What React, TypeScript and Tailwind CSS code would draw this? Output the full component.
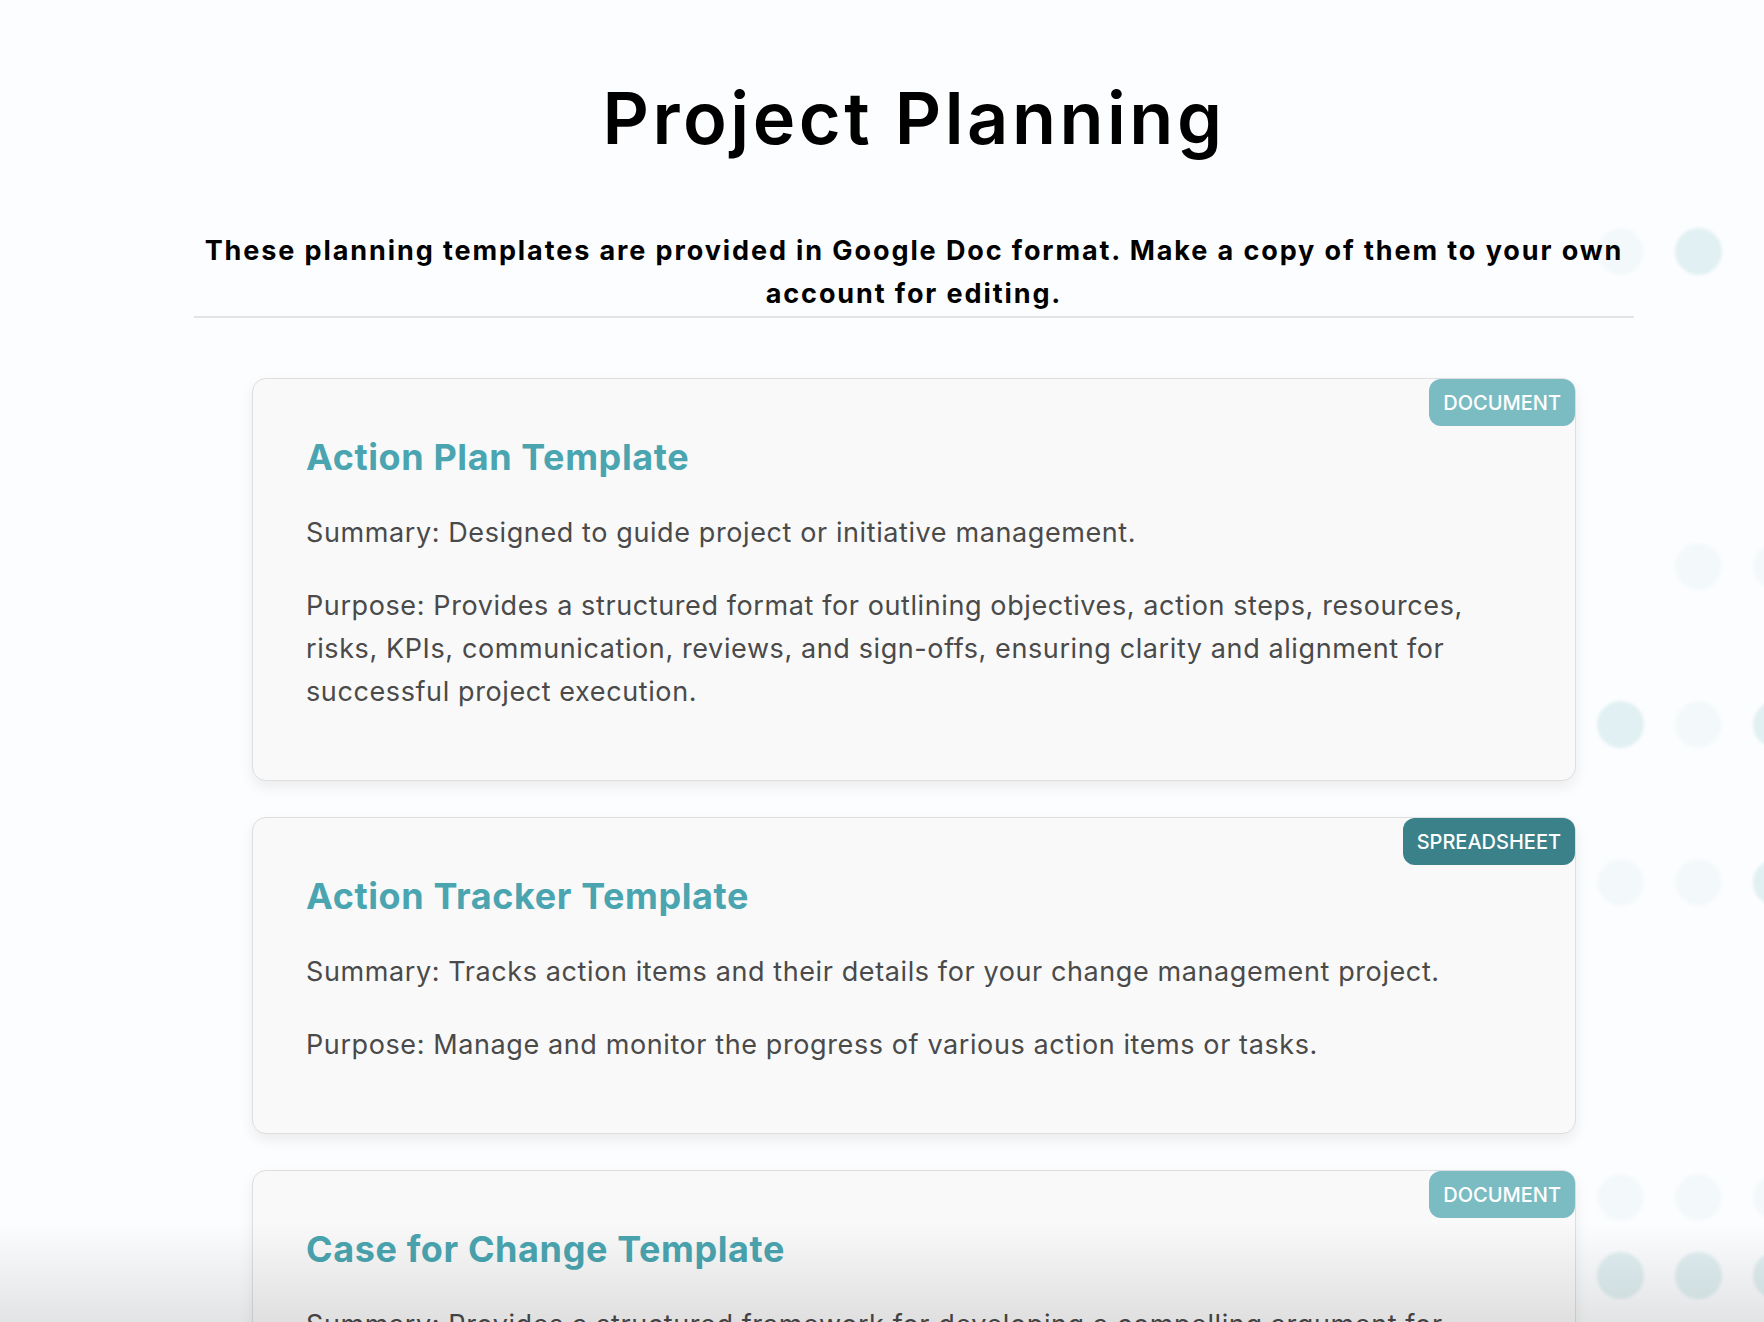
import React from "react"

interface Template {
  title: string
  kind: "DOCUMENT" | "SPREADSHEET"
  summary: string
  purpose: string
}

const TEMPLATES: Template[] = [
  {
    title: "Action Plan Template",
    kind: "DOCUMENT",
    summary: "Summary: Designed to guide project or initiative management.",
    purpose:
      "Purpose: Provides a structured format for outlining objectives, action steps, resources, risks, KPIs, communication, reviews, and sign-offs, ensuring clarity and alignment for successful project execution.",
  },
  {
    title: "Action Tracker Template",
    kind: "SPREADSHEET",
    summary: "Summary: Tracks action items and their details for your change management project.",
    purpose: "Purpose: Manage and monitor the progress of various action items or tasks.",
  },
  {
    title: "Case for Change Template",
    kind: "DOCUMENT",
    summary:
      "Summary: Provides a structured framework for developing a compelling argument for organizational change.",
    purpose:
      "Purpose: Helps leaders articulate why change is needed, what it involves and the benefits it will bring.",
  },
]

// decorative dots on the right edge: [x, y, strong]
const DOTS: [number, number, boolean][] = [
  [1620, 251, false], [1698, 251, true],
  [1698, 566, false], [1776, 566, false],
  [1620, 724, true], [1698, 724, false], [1776, 724, true],
  [1620, 882, false], [1698, 882, false], [1776, 882, true],
  [1620, 1197, false], [1698, 1197, false], [1776, 1197, false],
  [1620, 1275, true], [1698, 1275, true], [1776, 1275, true],
]

function Card({ t }: { t: Template }) {
  const badge = t.kind === "DOCUMENT" ? "bg-[#7bbcc3]" : "bg-[#3a8189]"
  return (
    <div className="relative bg-[#f9f9f9] border border-[#dedede] rounded-[14px] shadow-[0_6px_14px_rgba(0,0,0,0.07)] pt-[57px] pb-[67px] px-[53px]">
      <span className={`absolute top-0 right-0 ${badge} text-white rounded-[12px] h-[47px] px-[14px] flex items-center text-[20px] font-medium`}>
        {t.kind}
      </span>
      <h2 className="text-[36px] leading-[42px] font-bold text-[#4aa5b0] tracking-[0.6px]">{t.title}</h2>
      <p className="mt-[33px] max-w-[1185px] text-[27px] leading-[43px] text-[#4a4a4a] tracking-[0.6px]">{t.summary}</p>
      <p className="mt-[30px] max-w-[1185px] text-[27px] leading-[43px] text-[#4a4a4a] tracking-[0.6px]">{t.purpose}</p>
    </div>
  )
}

export default function App() {
  return (
    <div className="relative min-h-screen bg-[#fcfdfe] overflow-hidden font-['Inter','Liberation_Sans',sans-serif]">
      {DOTS.map(([x, y, strong], i) => (
        <div
          key={i}
          className={`absolute w-[47px] h-[47px] rounded-full blur-[1.5px] ${strong ? "bg-[#e1f0f3]" : "bg-[#f3f9fb]"}`}
          style={{ left: x - 23, top: y - 23 }}
        />
      ))}

      <div className="relative w-[1440px] ml-[194px] pt-[73px] pb-[40px]">
        <h1 className="text-center text-[72px] leading-[90px] font-semibold text-black tracking-[3.5px]">
          Project Planning
        </h1>
        <p className="mt-[66px] mx-auto w-[1430px] text-center text-[27px] leading-[43px] font-bold text-black tracking-[1.9px]">
          These planning templates are provided in Google Doc format. Make a copy of them to your own account for editing.
        </p>
        <div className="h-[2px] bg-[#e4e4e4] mt-[1px]" />

        <div className="mx-[58px] mt-[60px] flex flex-col gap-[36px]">
          {TEMPLATES.map(t => (
            <Card key={t.title} t={t} />
          ))}
        </div>
      </div>

      <div className="fixed left-0 right-0 bottom-0 h-[100px] bg-gradient-to-b from-transparent to-black/10 pointer-events-none" />
    </div>
  )
}
